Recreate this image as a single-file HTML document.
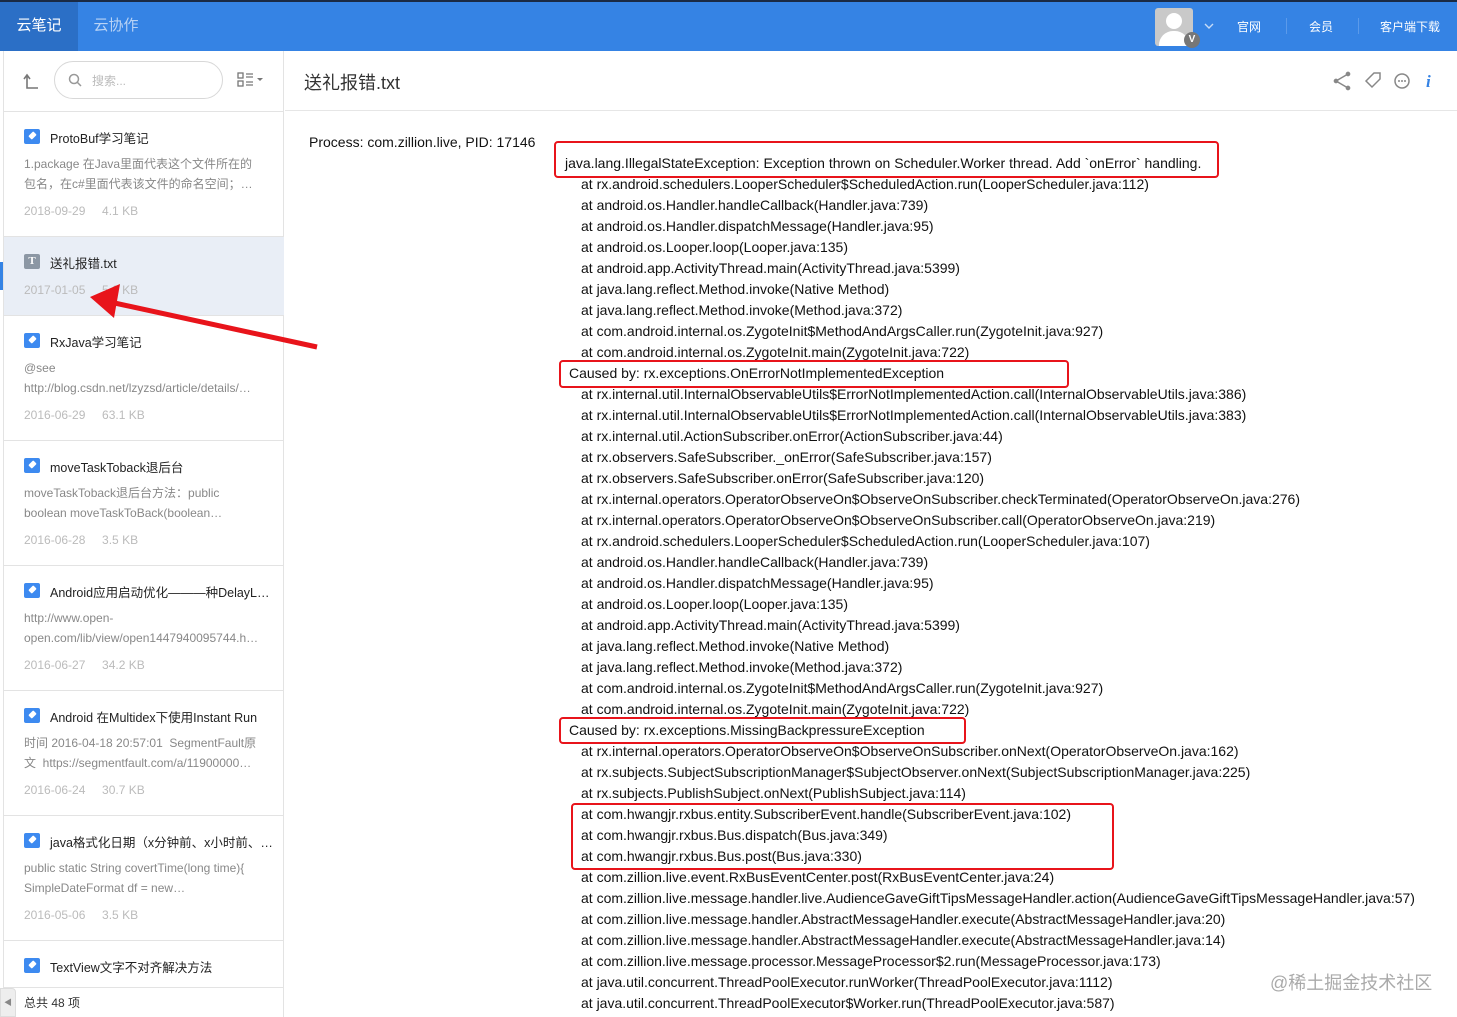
<!DOCTYPE html>
<html><head><meta charset="utf-8"><style>
*{margin:0;padding:0;box-sizing:border-box}
body{width:1457px;height:1017px;overflow:hidden;background:#fff;font-family:"Liberation Sans","Noto Sans CJK SC",sans-serif;position:relative;color:#333}
.top{position:absolute;left:0;top:0;width:1457px;height:51px;background:#3583e4;border-top:2px solid #1a2a44}
.tab{position:absolute;top:0;height:49px;line-height:47px;font-size:15px;color:#fff;text-align:center}
.side{position:absolute;left:3px;top:51px;width:281px;height:966px;border-left:1px solid #e3e3e3;border-right:1px solid #e3e3e3;background:#fff}
.item{position:absolute;left:0;width:280px;border-bottom:1px solid #e3e3e3}
.ic{position:absolute;left:20px;width:16px;height:15px;border-radius:2px;background:#3d8af0;overflow:hidden}
.ic:not(.t)::after{content:"";position:absolute;left:5px;top:4px;width:7px;height:5px;background:#fff;transform:rotate(-45deg);border-radius:1px}
.ic.t{background:#8c97a4;color:#fff;font:bold 11px "Liberation Serif",serif;text-align:center;line-height:15px}
.tt{position:absolute;left:46px;font-size:12.5px;color:#222;white-space:nowrap}
.pv{position:absolute;left:20px;font-size:12px;color:#888;line-height:20px;width:238px}
.mt{position:absolute;left:20px;font-size:12px;color:#bbb;word-spacing:0}
.code{position:absolute;font-size:14px;color:#111;line-height:21px;white-space:pre}
.box{position:absolute;border:2.5px solid #e8141b;border-radius:4px}
</style></head><body>
<div class="top">
 <div class="tab" style="left:0;width:78px;background:#2b6fc6">云笔记</div>
 <div class="tab" style="left:78px;width:76px;color:#b9d3f5">云协作</div>
 <div style="position:absolute;left:1155px;top:6px;width:38px;height:38px;background:#c9c9c9;border-radius:3px;overflow:hidden">
  <div style="position:absolute;left:11px;top:5px;width:16px;height:16px;border-radius:50%;background:#fff"></div>
  <div style="position:absolute;left:4px;top:23px;width:30px;height:20px;border-radius:14px 14px 0 0;background:#fff"></div></div>
 <div style="position:absolute;left:1184px;top:30px;width:16px;height:16px;border-radius:50%;background:#777;color:#fff;font-size:10px;text-align:center;line-height:16px;font-weight:bold">V</div>
 <svg style="position:absolute;left:1204px;top:20px" width="10" height="8" viewBox="0 0 10 8"><path d="M1 2 L5 6 L9 2" fill="none" stroke="#c7dcf7" stroke-width="1.4"/></svg>
 <div style="position:absolute;left:1237px;top:16px;color:#fff;font-size:12px">官网</div>
 <div style="position:absolute;left:1286px;top:16px;width:1px;height:16px;background:#5b9aea"></div>
 <div style="position:absolute;left:1309px;top:16px;color:#fff;font-size:12px">会员</div>
 <div style="position:absolute;left:1358px;top:16px;width:1px;height:16px;background:#5b9aea"></div>
 <div style="position:absolute;left:1380px;top:16px;color:#fff;font-size:12px">客户端下载</div>
</div>
<div class="side">
 <svg style="position:absolute;left:17px;top:20px" width="20" height="20" viewBox="0 0 20 20"><path d="M3 8 L6 4 L9 8 M6 4 V17 H17" fill="none" stroke="#777" stroke-width="1.6"/></svg>
 <div style="position:absolute;left:50px;top:10px;width:169px;height:38px;border:1px solid #d8d8d8;border-radius:19px">
  <svg style="position:absolute;left:13px;top:11px" width="15" height="15" viewBox="0 0 15 15"><circle cx="6" cy="6" r="4.5" fill="none" stroke="#999" stroke-width="1.5"/><path d="M9.5 9.5 L13 13" stroke="#999" stroke-width="1.5"/></svg>
  <span style="position:absolute;left:37px;top:10px;font-size:12px;color:#bbb">搜索...</span></div>
 <svg style="position:absolute;left:233px;top:21px" width="28" height="16" viewBox="0 0 28 16"><rect x="1" y="1" width="5" height="5" fill="none" stroke="#777" stroke-width="1.3"/><rect x="1" y="9" width="5" height="5" fill="none" stroke="#777" stroke-width="1.3"/><path d="M9 2h7M9 5h7M9 10h7M9 13h7" stroke="#777" stroke-width="1.3"/><path d="M20 6h6l-3 3z" fill="#777"/></svg>
 <div style="position:absolute;left:0;top:60px;width:280px;height:1px;background:#e3e3e3"></div>

 <div class="item" style="top:61px;height:125px"><div class="ic" style="top:17px"></div><div class="tt" style="top:16px">ProtoBuf学习笔记</div><div class="pv" style="top:42px">1.package 在Java里面代表这个文件所在的包名，在c#里面代表该文件的命名空间；…</div><div class="mt" style="top:92px">2018-09-29&nbsp;&nbsp;&nbsp;&nbsp;&nbsp;4.1 KB</div></div>
 <div class="item" style="top:186px;height:79px;background:#e9eef6"><div class="ic t" style="top:17px">T</div><div class="tt" style="top:16px">送礼报错.txt</div><div class="mt" style="top:46px">2017-01-05&nbsp;&nbsp;&nbsp;&nbsp;&nbsp;5.6 KB</div></div>
 <div class="item" style="top:265px;height:125px"><div class="ic" style="top:17px"></div><div class="tt" style="top:16px">RxJava学习笔记</div><div class="pv" style="top:42px">@see<br>http://blog.csdn.net/lzyzsd/article/details/…</div><div class="mt" style="top:92px">2016-06-29&nbsp;&nbsp;&nbsp;&nbsp;&nbsp;63.1 KB</div></div>
 <div class="item" style="top:390px;height:125px"><div class="ic" style="top:17px"></div><div class="tt" style="top:16px">moveTaskToback退后台</div><div class="pv" style="top:42px">moveTaskToback退后台方法：public<br>boolean moveTaskToBack(boolean…</div><div class="mt" style="top:92px">2016-06-28&nbsp;&nbsp;&nbsp;&nbsp;&nbsp;3.5 KB</div></div>
 <div class="item" style="top:515px;height:125px"><div class="ic" style="top:17px"></div><div class="tt" style="top:16px">Android应用启动优化———种DelayL…</div><div class="pv" style="top:42px">http://www.open-<br>open.com/lib/view/open1447940095744.h…</div><div class="mt" style="top:92px">2016-06-27&nbsp;&nbsp;&nbsp;&nbsp;&nbsp;34.2 KB</div></div>
 <div class="item" style="top:640px;height:125px"><div class="ic" style="top:17px"></div><div class="tt" style="top:16px">Android 在Multidex下使用Instant Run</div><div class="pv" style="top:42px">时间 2016-04-18 20:57:01&nbsp; SegmentFault原<br>文&nbsp; https://segmentfault.com/a/11900000…</div><div class="mt" style="top:92px">2016-06-24&nbsp;&nbsp;&nbsp;&nbsp;&nbsp;30.7 KB</div></div>
 <div class="item" style="top:765px;height:125px"><div class="ic" style="top:17px"></div><div class="tt" style="top:16px">java格式化日期（x分钟前、x小时前、…</div><div class="pv" style="top:42px">public static String covertTime(long time){<br>SimpleDateFormat df = new…</div><div class="mt" style="top:92px">2016-05-06&nbsp;&nbsp;&nbsp;&nbsp;&nbsp;3.5 KB</div></div>
 <div class="item" style="top:890px;height:47px"><div class="ic" style="top:17px"></div><div class="tt" style="top:16px">TextView文字不对齐解决方法</div></div>
 <div style="position:absolute;left:20px;top:943px;font-size:12px;color:#333">总共 48 项</div>
</div>
<div style="position:absolute;left:0;top:988px;width:16px;height:29px;background:#eee;border:1px solid #ddd;border-radius:0 4px 0 0;font-size:8px;color:#888;line-height:28px;text-align:center">◀</div>
<div style="position:absolute;left:0;top:262px;width:3px;height:28px;background:#3583e4"></div>

<div style="position:absolute;left:304px;top:69px;font-size:18px;color:#333">送礼报错.txt</div>
<div style="position:absolute;left:285px;top:110px;width:1172px;height:1px;background:#e6e6e6"></div>
<svg style="position:absolute;left:1330px;top:70px" width="115" height="22" viewBox="0 0 115 22">
<g fill="none" stroke="#888" stroke-width="1.5"><path d="M18 4 L6 11 L18 18"/><circle cx="18" cy="4" r="1.6" fill="#888"/><circle cx="18" cy="18" r="1.6" fill="#888"/><circle cx="6" cy="11" r="1.6" fill="#888"/>
<path d="M36 11 L44 3 H50 V9 L42 17 Z"/><circle cx="72" cy="11" r="7"/></g>
<circle cx="69" cy="11" r="1" fill="#888"/><circle cx="72" cy="11" r="1" fill="#888"/><circle cx="75" cy="11" r="1" fill="#888"/>
<text x="96" y="17" font-family="Liberation Serif" font-style="italic" font-weight="bold" font-size="17" fill="#3583e4">i</text></svg>

<div class="code" style="left:309px;top:132px">Process: com.zillion.live, PID: 17146</div>
<div class="code" style="left:565px;top:153px">java.lang.IllegalStateException: Exception thrown on Scheduler.Worker thread. Add `onError` handling.</div>
<div class="code" style="left:581px;top:174px">at rx.android.schedulers.LooperScheduler$ScheduledAction.run(LooperScheduler.java:112)
at android.os.Handler.handleCallback(Handler.java:739)
at android.os.Handler.dispatchMessage(Handler.java:95)
at android.os.Looper.loop(Looper.java:135)
at android.app.ActivityThread.main(ActivityThread.java:5399)
at java.lang.reflect.Method.invoke(Native Method)
at java.lang.reflect.Method.invoke(Method.java:372)
at com.android.internal.os.ZygoteInit$MethodAndArgsCaller.run(ZygoteInit.java:927)
at com.android.internal.os.ZygoteInit.main(ZygoteInit.java:722)</div>
<div class="code" style="left:569px;top:363px">Caused by: rx.exceptions.OnErrorNotImplementedException</div>
<div class="code" style="left:581px;top:384px">at rx.internal.util.InternalObservableUtils$ErrorNotImplementedAction.call(InternalObservableUtils.java:386)
at rx.internal.util.InternalObservableUtils$ErrorNotImplementedAction.call(InternalObservableUtils.java:383)
at rx.internal.util.ActionSubscriber.onError(ActionSubscriber.java:44)
at rx.observers.SafeSubscriber._onError(SafeSubscriber.java:157)
at rx.observers.SafeSubscriber.onError(SafeSubscriber.java:120)
at rx.internal.operators.OperatorObserveOn$ObserveOnSubscriber.checkTerminated(OperatorObserveOn.java:276)
at rx.internal.operators.OperatorObserveOn$ObserveOnSubscriber.call(OperatorObserveOn.java:219)
at rx.android.schedulers.LooperScheduler$ScheduledAction.run(LooperScheduler.java:107)
at android.os.Handler.handleCallback(Handler.java:739)
at android.os.Handler.dispatchMessage(Handler.java:95)
at android.os.Looper.loop(Looper.java:135)
at android.app.ActivityThread.main(ActivityThread.java:5399)
at java.lang.reflect.Method.invoke(Native Method)
at java.lang.reflect.Method.invoke(Method.java:372)
at com.android.internal.os.ZygoteInit$MethodAndArgsCaller.run(ZygoteInit.java:927)
at com.android.internal.os.ZygoteInit.main(ZygoteInit.java:722)</div>
<div class="code" style="left:569px;top:720px">Caused by: rx.exceptions.MissingBackpressureException</div>
<div class="code" style="left:581px;top:741px">at rx.internal.operators.OperatorObserveOn$ObserveOnSubscriber.onNext(OperatorObserveOn.java:162)
at rx.subjects.SubjectSubscriptionManager$SubjectObserver.onNext(SubjectSubscriptionManager.java:225)
at rx.subjects.PublishSubject.onNext(PublishSubject.java:114)
at com.hwangjr.rxbus.entity.SubscriberEvent.handle(SubscriberEvent.java:102)
at com.hwangjr.rxbus.Bus.dispatch(Bus.java:349)
at com.hwangjr.rxbus.Bus.post(Bus.java:330)
at com.zillion.live.event.RxBusEventCenter.post(RxBusEventCenter.java:24)
at com.zillion.live.message.handler.live.AudienceGaveGiftTipsMessageHandler.action(AudienceGaveGiftTipsMessageHandler.java:57)
at com.zillion.live.message.handler.AbstractMessageHandler.execute(AbstractMessageHandler.java:20)
at com.zillion.live.message.handler.AbstractMessageHandler.execute(AbstractMessageHandler.java:14)
at com.zillion.live.message.processor.MessageProcessor$2.run(MessageProcessor.java:173)
at java.util.concurrent.ThreadPoolExecutor.runWorker(ThreadPoolExecutor.java:1112)
at java.util.concurrent.ThreadPoolExecutor$Worker.run(ThreadPoolExecutor.java:587)</div>

<div class="box" style="left:554px;top:141px;width:665px;height:37px"></div>
<div class="box" style="left:559px;top:360px;width:510px;height:28px"></div>
<div class="box" style="left:559px;top:717px;width:407px;height:27px"></div>
<div class="box" style="left:571px;top:803px;width:543px;height:67px"></div>

<svg style="position:absolute;left:80px;top:280px" width="245" height="75" viewBox="0 0 245 75">
<path d="M237 67 L30 22" stroke="#e8141b" stroke-width="5"/><path d="M10 17 L40 4 L34 38 Z" fill="#e8141b"/></svg>

<div style="position:absolute;left:1270px;top:969px;font-size:18px;color:#aaa">@稀土掘金技术社区</div>
</body></html>
